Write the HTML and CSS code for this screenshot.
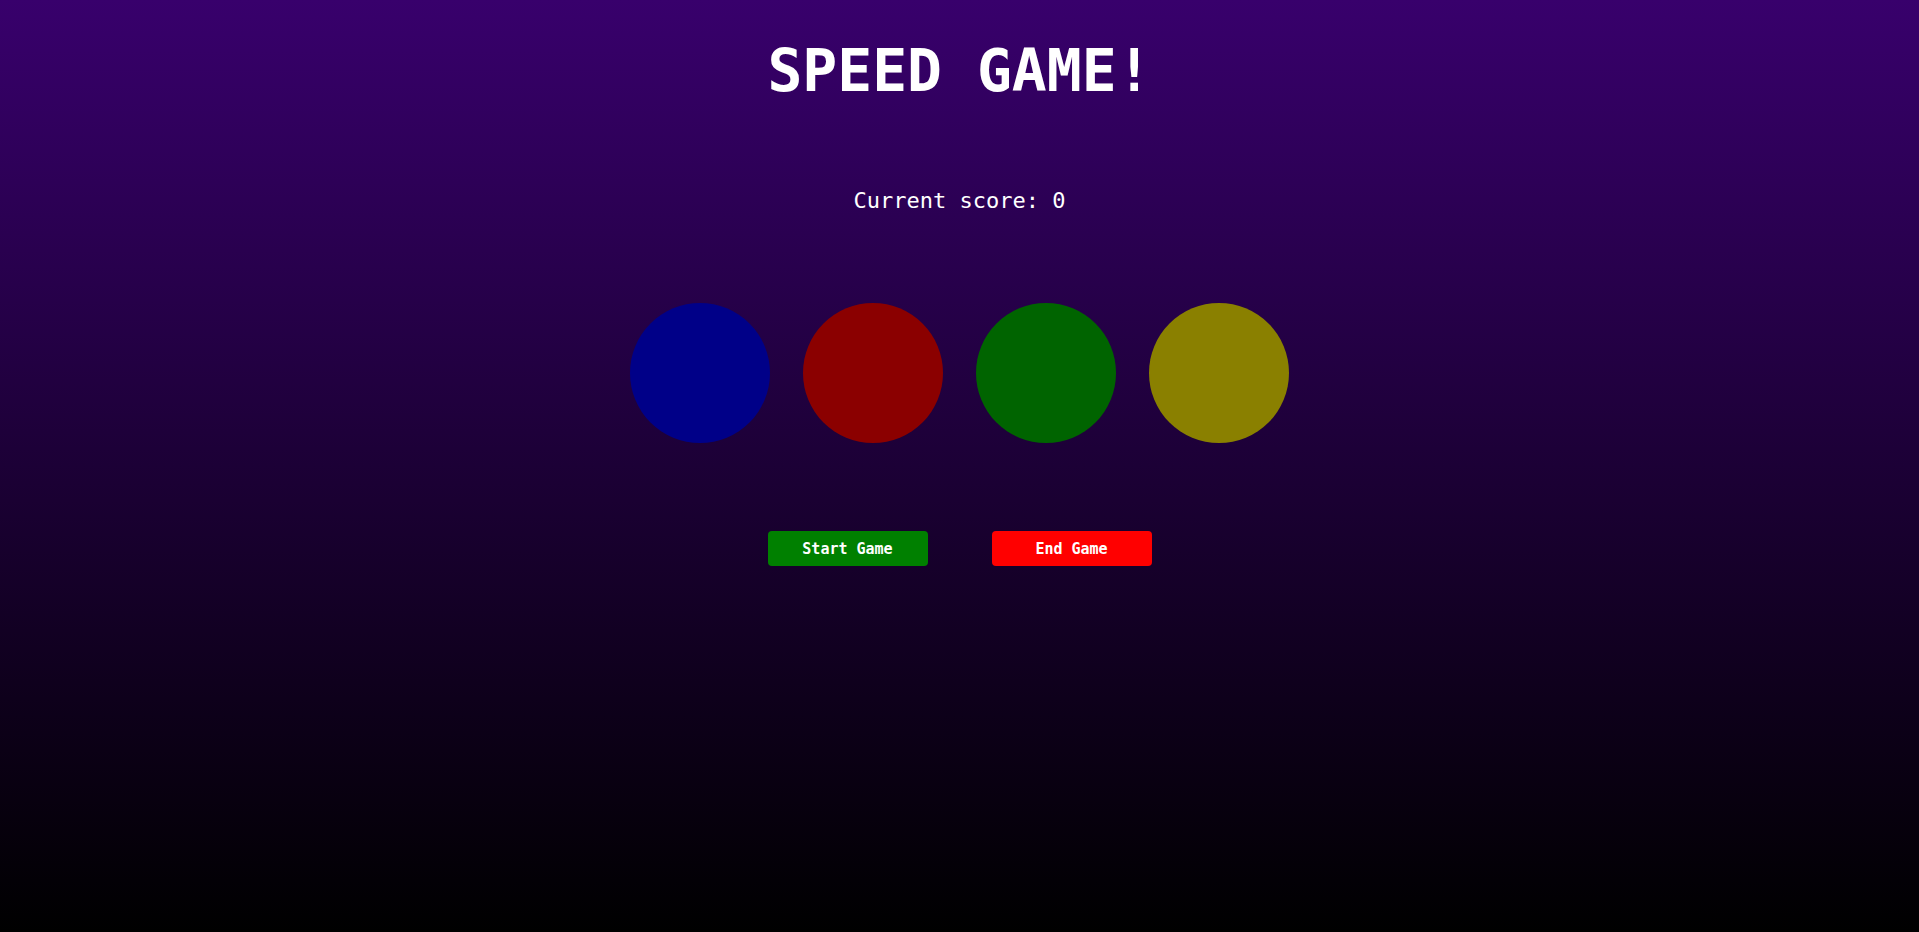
FILE: index.html
```html
<!DOCTYPE html>
<html lang="en">
<head>
<meta charset="utf-8">
<title>Speed Game</title>
<link rel="stylesheet" href="styles.css">
</head>
<body>
<main class="game">
  <h1 class="title">SPEED GAME!</h1>
  <p class="score">Current score: <span class="score-value">0</span></p>
  <div class="circles">
    <div class="circle circle-blue"></div>
    <div class="circle circle-red"></div>
    <div class="circle circle-green"></div>
    <div class="circle circle-yellow"></div>
  </div>
  <div class="controls">
    <button class="btn btn-start" type="button">Start Game</button>
    <button class="btn btn-end" type="button">End Game</button>
  </div>
</main>
</body>
</html>
```
FILE: styles.css
```css
html, body {
  margin: 0;
  padding: 0;
}

body {
  min-height: 100vh;
  background: linear-gradient(to bottom, rgb(56, 0, 108), rgb(0, 0, 0));
  color: #ffffff;
  font-family: "DejaVu Sans Mono", "Liberation Mono", monospace;
}

.game {
  display: flex;
  flex-direction: column;
  align-items: center;
  padding-top: 42px;
}

.title {
  margin: 0;
  font-size: 58px;
  line-height: 58px;
  font-weight: bold;
  letter-spacing: 0;
}

.score {
  margin: 90px 0 0;
  font-size: 22px;
  line-height: 22px;
}

.circles {
  display: flex;
  gap: 33px;
  margin-top: 91px;
}

.circle {
  width: 140px;
  height: 140px;
  border-radius: 50%;
}

.circle-blue { background: #000088; }
.circle-red { background: #8b0000; }
.circle-green { background: #006400; }
.circle-yellow { background: #8a8000; }

.controls {
  display: flex;
  gap: 64px;
  margin-top: 88px;
}

.btn {
  width: 160px;
  height: 35px;
  border: none;
  border-radius: 4px;
  color: #ffffff;
  font-family: "DejaVu Sans Mono", "Liberation Mono", monospace;
  font-size: 15px;
  font-weight: bold;
  padding: 0;
  cursor: pointer;
}

.btn-start { background: #008000; }
.btn-end { background: #ff0000; }
```
